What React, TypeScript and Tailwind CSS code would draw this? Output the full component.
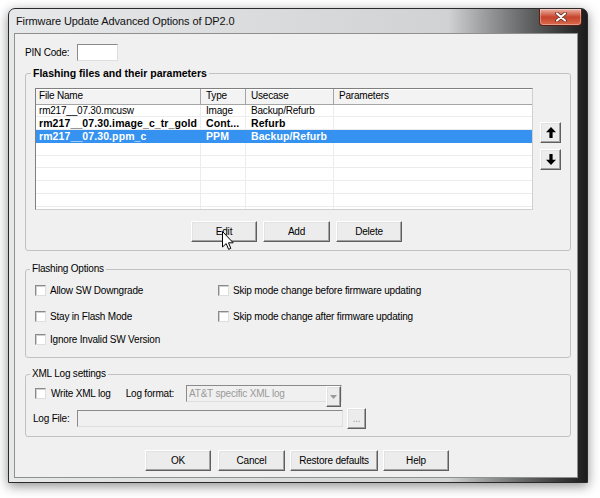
import React from "react";

function Btn({ children, className }: { children?: React.ReactNode; className: string }) {
  return (
    <div
      className={
        "flex items-center justify-center h-[21px] bg-[#ececec] border border-t-[#ffffff] border-l-[#ffffff] border-r-[#5f5f5f] border-b-[#5f5f5f] shadow-[inset_-1px_-1px_0_#a3a3a3,inset_1px_1px_0_#e2e2e2] " +
        className
      }
    >
      {children}
    </div>
  );
}

function Check() {
  return (
    <div className="w-[11px] h-[11px] shrink-0 bg-white border border-t-[#8a8a8a] border-l-[#8a8a8a] border-r-[#dedede] border-b-[#dedede] shadow-[inset_1px_1px_0_#cfcfcf]" />
  );
}

const rows = [
  { f: "rm217__07.30.mcusw", t: "Image", u: "Backup/Refurb", bold: false, sel: false },
  { f: "rm217__07.30.image_c_tr_gold", t: "Cont...", u: "Refurb", bold: true, sel: false },
  { f: "rm217__07.30.ppm_c", t: "PPM", u: "Backup/Refurb", bold: true, sel: true },
  { f: "", t: "", u: "", bold: false, sel: false },
  { f: "", t: "", u: "", bold: false, sel: false },
  { f: "", t: "", u: "", bold: false, sel: false },
  { f: "", t: "", u: "", bold: false, sel: false },
  { f: "", t: "", u: "", bold: false, sel: false },
  { f: "", t: "", u: "", bold: false, sel: false },
];

export default function App() {
  return (
    <div className="relative w-[600px] h-[498px] bg-white overflow-hidden pl-[8px] pt-[8px] font-['Liberation_Sans',Arial,sans-serif]">
      {/* window */}
      <div className="w-[580px] h-[475px] rounded-t-[7px] border border-[#2a2a2a] bg-linear-to-r from-[#e6e8ea] via-[#d0d2d4] via-76% to-[#1c1c1c] shadow-[0_3px_12px_rgba(0,0,0,0.45)] flex flex-col">
        {/* title bar */}
        <div className="h-[24px] flex justify-between items-start">
          <span className="ml-[7px] mt-[6px] text-[11px] leading-[13px] text-[#111] tracking-[-0.1px]">
            Firmware Update Advanced Options of DP2.0
          </span>
          <div className="mr-[5px] w-[43px] h-[17px] rounded-b-[4px] border border-t-0 border-[#5a2015] bg-linear-to-b from-[#eab1a2] via-[#c6432b] to-[#d96a4c] flex items-center justify-center shadow-[inset_0_0_0_1px_rgba(255,255,255,0.35)]">
            <svg width="12" height="10" viewBox="0 0 12 10">
              <path d="M2 1.5 L10 8.5 M10 1.5 L2 8.5" stroke="#5a2015" strokeWidth="3.6" strokeLinecap="round" />
              <path d="M2 1.5 L10 8.5 M10 1.5 L2 8.5" stroke="#ffffff" strokeWidth="2.2" strokeLinecap="round" />
            </svg>
          </div>
        </div>
        {/* body */}
        <div className="flex">
          <div className="w-[5px]" />
          <div className="w-[564px] h-[445px] bg-[#f0f0f0] border border-[#8e8f8f] flex flex-col text-[10px] leading-[12px] tracking-[-0.2px] text-black">
            {/* PIN */}
            <div className="flex items-center pt-[10px] pl-[10px] gap-[8px]">
              <span>PIN Code:</span>
              <div className="w-[41px] h-[17px] bg-white border border-t-[#8a8a8a] border-l-[#8a8a8a] border-r-[#dedede] border-b-[#dedede]" />
            </div>

            {/* Group 1 */}
            <fieldset className="mt-[6px] ml-[10px] w-[546px] border border-[#c2c2c2] rounded-[3px] p-0 m-0">
              <legend className="ml-[5px] px-[2px] text-[10.5px] leading-[12px] font-bold tracking-[0px]">
                Flashing files and their parameters
              </legend>
              <div className="flex mt-[9px] ml-[9px]">
                <div className="w-[498px] h-[122px] bg-white border border-t-[#7f7f7f] border-l-[#7f7f7f] border-r-[#cfcfcf] border-b-[#cfcfcf] overflow-hidden">
                  <div className="flex h-[15.5px] bg-[#f3f3f3] border-b border-[#a5a5a5] shadow-[inset_0_1px_0_#ffffff]">
                    <div className="w-[165px] pl-[3px] border-r border-[#a5a5a5] flex items-center">File Name</div>
                    <div className="w-[45px] pl-[5px] border-r border-[#a5a5a5] flex items-center">Type</div>
                    <div className="w-[88px] pl-[5px] border-r border-[#a5a5a5] flex items-center">Usecase</div>
                    <div className="flex-1 pl-[5px] flex items-center">Parameters</div>
                  </div>
                  {rows.map((r, i) => (
                    <div
                      key={i}
                      className={
                        "flex h-[12.75px] leading-[12px] " +
                        (r.sel ? "bg-[#3592f0] text-white" : "border-b border-[#ececec]") +
                        (r.bold ? " font-bold text-[10.5px] tracking-[0.1px]" : "")
                      }
                    >
                      <div className={"w-[165px] pl-[3px] whitespace-nowrap overflow-hidden " + (r.sel ? "" : "border-r border-[#ececec]")}>{r.f}</div>
                      <div className={"w-[45px] pl-[5px] whitespace-nowrap overflow-hidden " + (r.sel ? "" : "border-r border-[#ececec]")}>{r.t}</div>
                      <div className={"w-[88px] pl-[5px] whitespace-nowrap overflow-hidden " + (r.sel ? "" : "border-r border-[#ececec]")}>{r.u}</div>
                      <div className="flex-1" />
                    </div>
                  ))}
                </div>
                <div className="ml-[7px] mt-[34px] flex flex-col gap-[6px]">
                  <Btn className="w-[21px] h-[20px]">
                    <svg width="10" height="11" viewBox="0 0 10 11">
                      <path d="M5 0 L10 5.2 L6.6 5.2 L6.6 11 L3.4 11 L3.4 5.2 L0 5.2 Z" fill="#000" />
                    </svg>
                  </Btn>
                  <Btn className="w-[21px] h-[20px]">
                    <svg width="10" height="11" viewBox="0 0 10 11">
                      <path d="M5 11 L10 5.8 L6.6 5.8 L6.6 0 L3.4 0 L3.4 5.8 L0 5.8 Z" fill="#000" />
                    </svg>
                  </Btn>
                </div>
              </div>
              <div className="flex gap-[6px] mt-[11px] ml-[165px] pb-[8px]">
                <Btn className="w-[66px] border-[#3c3c3c] border-t-[#3c3c3c] border-l-[#3c3c3c] shadow-[inset_-1px_-1px_0_#7a7a7a,inset_1px_1px_0_#ffffff]">Edit</Btn>
                <Btn className="w-[67px]">Add</Btn>
                <Btn className="w-[66px]">Delete</Btn>
              </div>
            </fieldset>

            {/* Group 2 */}
            <fieldset className="mt-[12px] ml-[10px] w-[546px] border border-[#c2c2c2] rounded-[3px] p-0 m-0">
              <legend className="ml-[4px] px-[2px] leading-[12px]">Flashing Options</legend>
              <div className="flex pl-[9px] pt-[9px] pb-[11px]">
                <div className="w-[183px] flex flex-col">
                  <div className="h-[13px] flex items-center gap-[4px]"><Check /><span>Allow SW Downgrade</span></div>
                  <div className="h-[13px] mt-[13px] flex items-center gap-[4px]"><Check /><span>Stay in Flash Mode</span></div>
                  <div className="h-[13px] mt-[10px] flex items-center gap-[4px]"><Check /><span>Ignore Invalid SW Version</span></div>
                </div>
                <div className="flex flex-col">
                  <div className="h-[13px] flex items-center gap-[4px]"><Check /><span>Skip mode change before firmware updating</span></div>
                  <div className="h-[13px] mt-[13px] flex items-center gap-[4px]"><Check /><span>Skip mode change after firmware updating</span></div>
                </div>
              </div>
            </fieldset>

            {/* Group 3 */}
            <fieldset className="mt-[10px] ml-[10px] w-[546px] border border-[#c2c2c2] rounded-[3px] p-0 m-0">
              <legend className="ml-[4px] px-[2px] leading-[12px]">XML Log settings</legend>
              <div className="flex items-center mt-[5px] pl-[9px] h-[17px]">
                <Check />
                <span className="ml-[5px]">Write XML log</span>
                <span className="ml-[15px]">Log format:</span>
                <div className="ml-[auto] mr-[228px] w-[156px] h-[17px] flex bg-[#f0f0f0] border border-t-[#8a8a8a] border-l-[#8a8a8a] border-r-[#dedede] border-b-[#dedede]">
                  <span className="flex-1 pl-[2px] flex items-center text-[#9a9a9a]">AT&amp;T specific XML log</span>
                  <Btn className="w-[15px] h-[15px]">
                    <svg width="7" height="4" viewBox="0 0 7 4"><path d="M0 0 L7 0 L3.5 4 Z" fill="#9a9a9a" /></svg>
                  </Btn>
                </div>
              </div>
              <div className="flex items-center mt-[6px] pl-[7px] pb-[7px]">
                <span className="w-[44px]">Log File:</span>
                <div className="w-[266px] h-[17px] bg-[#f0f0f0] border border-t-[#8a8a8a] border-l-[#8a8a8a] border-r-[#dedede] border-b-[#dedede]" />
                <Btn className="ml-[4px] w-[19px] h-[17px] text-[#9a9a9a]">...</Btn>
              </div>
            </fieldset>

            {/* bottom buttons */}
            <div className="flex mt-[13px] ml-[130px]">
              <Btn className="w-[66px]">OK</Btn>
              <Btn className="ml-[7px] w-[67px]">Cancel</Btn>
              <Btn className="ml-[5px] w-[88px]">Restore defaults</Btn>
              <Btn className="ml-[5px] w-[66px]">Help</Btn>
            </div>
          </div>
          <div className="flex-1" />
        </div>
      </div>

      {/* mouse cursor */}
      <svg className="absolute left-[222px] top-[231px]" width="13" height="20" viewBox="0 0 13 20">
        <path d="M0.5 0.5 L0.5 16 L4.2 12.6 L6.6 18.3 L8.8 17.4 L6.5 11.8 L11.2 11.8 Z" fill="#ffffff" stroke="#000000" strokeWidth="1" strokeLinejoin="round" />
      </svg>
    </div>
  );
}
